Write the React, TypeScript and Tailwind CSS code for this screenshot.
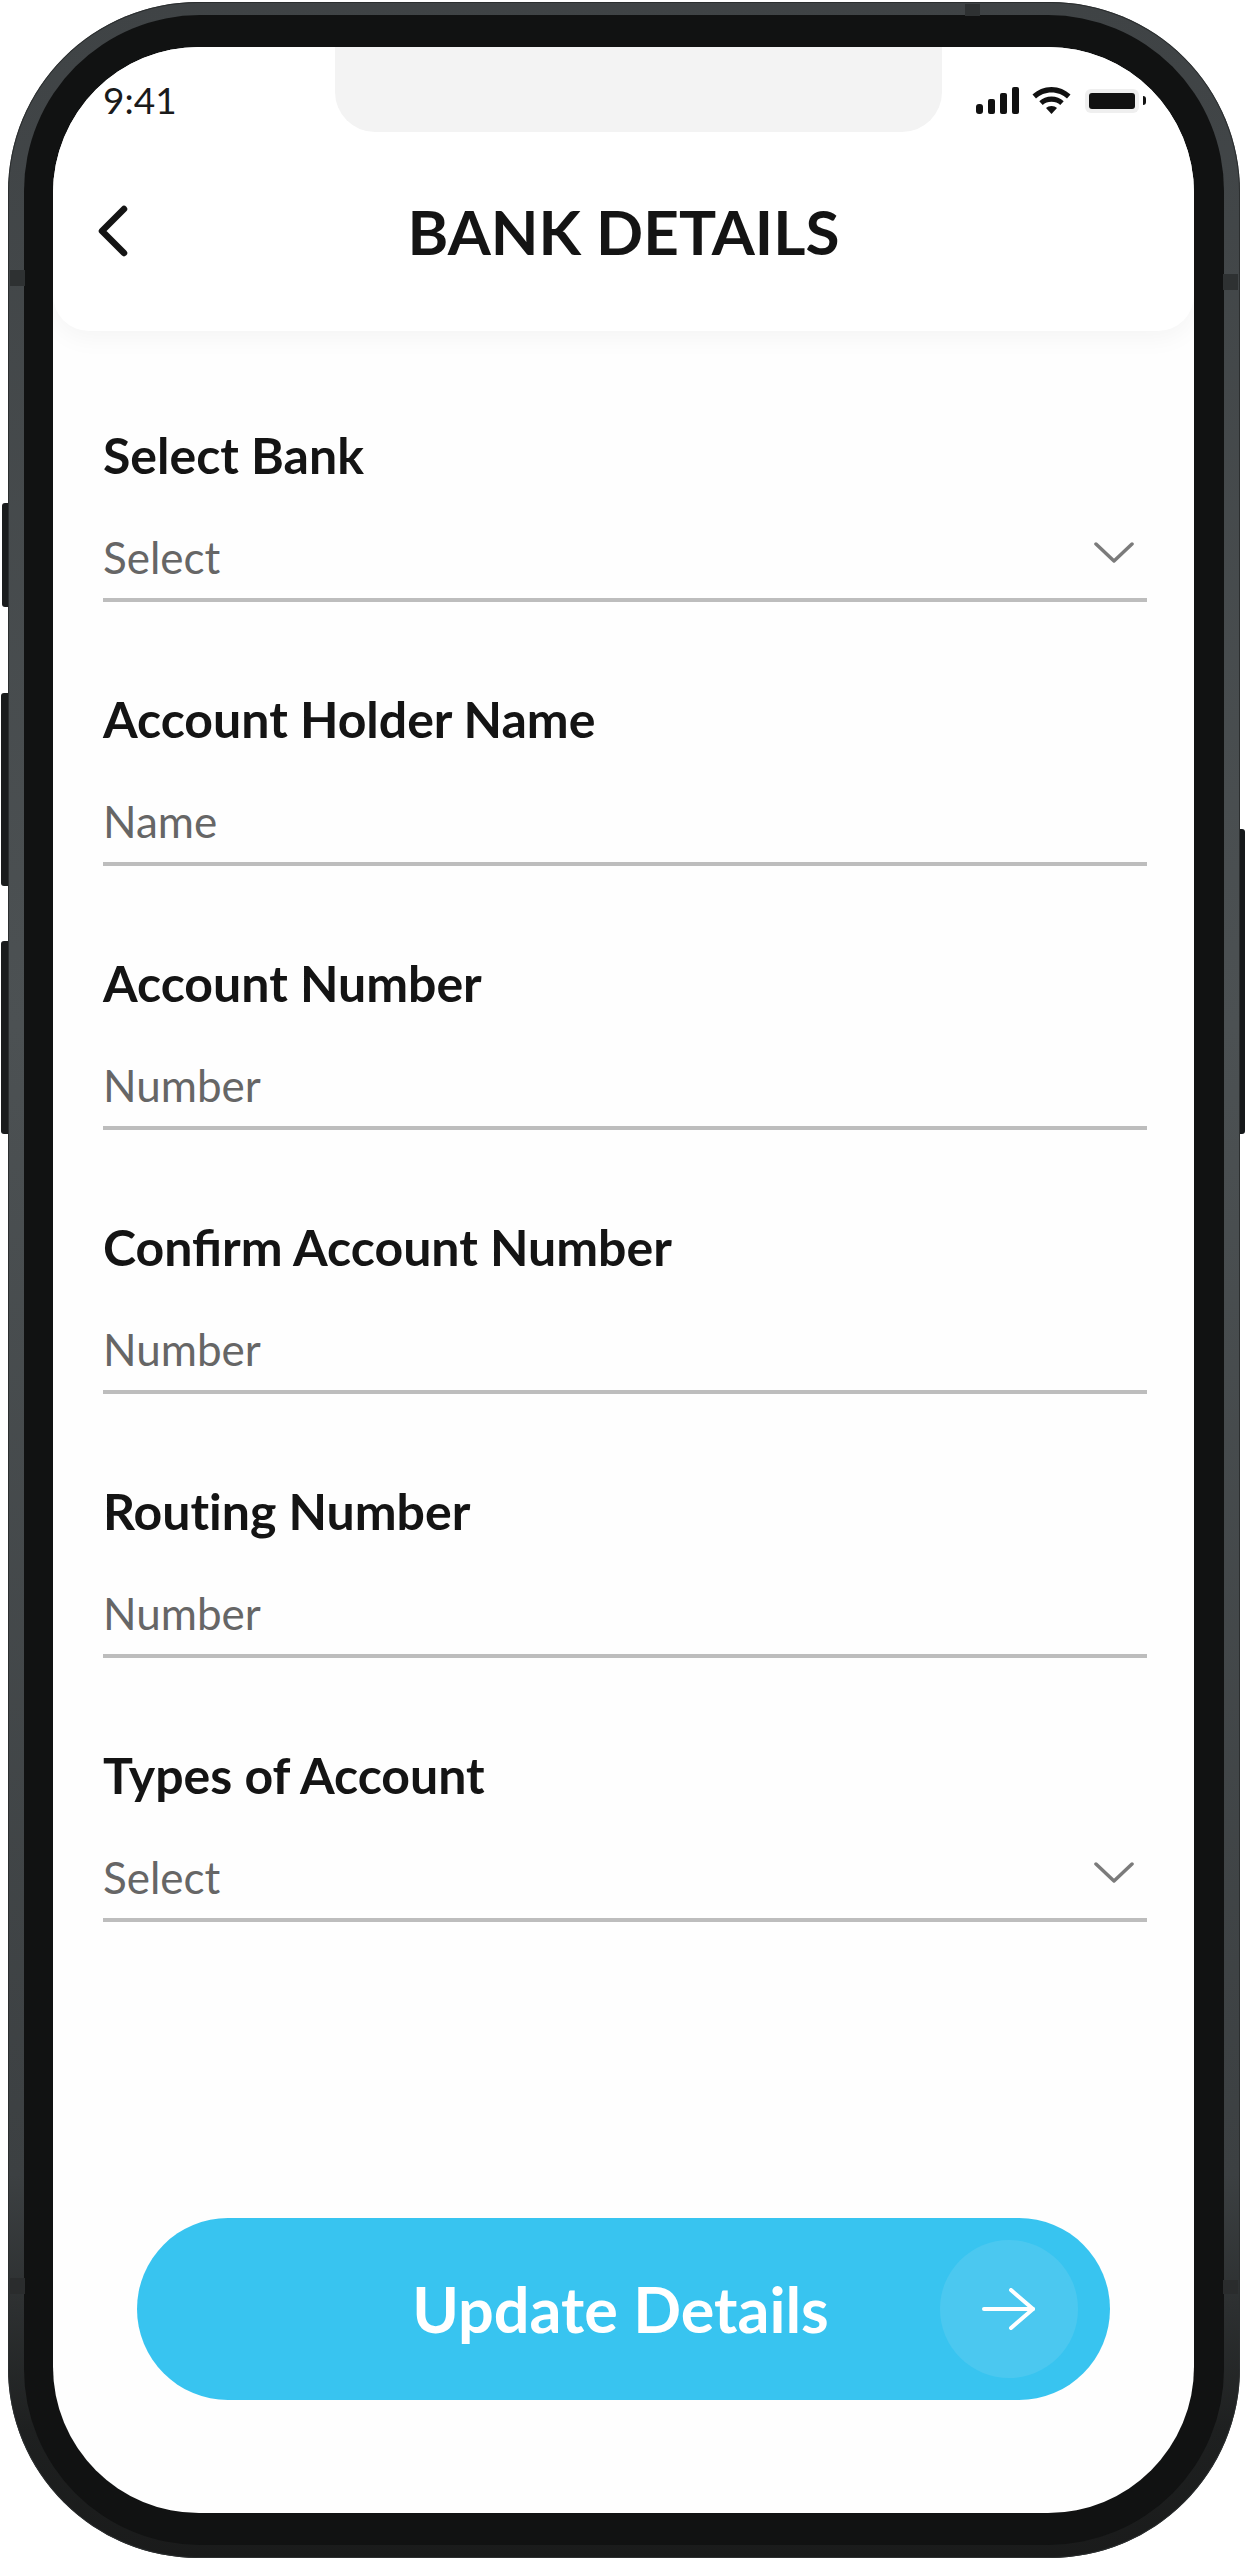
const fields = [
  { label: "Select Bank", placeholder: "Select", select: true },
  { label: "Account Holder Name", placeholder: "Name" },
  { label: "Account Number", placeholder: "Number" },
  { label: "Confirm Account Number", placeholder: "Number" },
  { label: "Routing Number", placeholder: "Number", noLigatures: true },
  { label: "Types of Account", placeholder: "Select", select: true },
];

function StatusIcons() {
  return (
    <div className="flex items-center">
      <svg width="44" height="27" viewBox="0 0 44 27" fill="#111">
        <rect x="0" y="17" width="7" height="10" rx="3" />
        <rect x="12" y="12" width="7" height="15" rx="2" />
        <rect x="24" y="6" width="7" height="21" rx="2" />
        <rect x="36" y="0" width="7" height="27" rx="2" />
      </svg>
      <svg className="ml-[12px]" width="39" height="27" viewBox="0 0 39 27" fill="#111">
        <path d="M19.5 0C12 0 5.5 3 0.5 7.5L4 11.5C8 7.8 13.5 5.5 19.5 5.5S31 7.8 35 11.5L38.5 7.5C33.5 3 27 0 19.5 0Z" />
        <path d="M19.5 9.5C14.8 9.5 10.5 11.3 7.3 14.3L10.7 18C13 16 16 14.8 19.5 14.8S26 16 28.3 18L31.7 14.3C28.5 11.3 24.2 9.5 19.5 9.5Z" />
        <path d="M19.5 19C17.3 19 15.4 19.8 14 21L19.5 27L25 21C23.6 19.8 21.7 19 19.5 19Z" />
      </svg>
      <div className="ml-[14px] h-[24px] w-[54px] rounded-[6px] bg-[#efefef] p-[4px]">
        <div className="h-full w-full rounded-[3px] bg-[#111]" />
      </div>
      <div className="ml-[4px] h-[9px] w-[3px] rounded-r-full bg-[#111]" />
    </div>
  );
}

function Field({ label, placeholder, select, noLigatures }: { label: string; placeholder: string; select?: boolean; noLigatures?: boolean }) {
  return (
    <div className="h-[264px]">
      <div className={noLigatures ? "h-[92px] text-[50px] leading-[60px] font-bold text-[#141414] [font-variant-ligatures:none]" : "h-[92px] text-[50px] leading-[60px] font-bold text-[#141414]"}>
        {label}
      </div>
      <div className="flex h-[85px] items-center justify-between border-b-[4px] border-[#bdbdbd]">
        <span className="pb-[2px] text-[44px] leading-[50px] text-[#666666]">{placeholder}</span>
        {select && (
          <svg className="mr-[13px] mb-[10px]" width="40" height="22" viewBox="0 0 40 22" fill="none" stroke="#7b7b7b" strokeWidth="3.5" strokeLinecap="round" strokeLinejoin="round">
            <path d="M2 2L20 19L38 2" />
          </svg>
        )}
      </div>
    </div>
  );
}

export default function App() {
  return (
    <div className="relative h-[2560px] w-[1245px] overflow-hidden bg-white pt-[2px] pr-[5px] pl-[8px] font-['Lato',sans-serif]">
      {/* side buttons */}
      <div className="absolute top-[503px] left-[2px] h-[104px] w-[8px] rounded-l-[3px] bg-[#1a1c1d]" />
      <div className="absolute top-[693px] left-[1px] h-[193px] w-[9px] rounded-l-[3px] bg-[#1a1c1d]" />
      <div className="absolute top-[941px] left-[1px] h-[193px] w-[9px] rounded-l-[3px] bg-[#1a1c1d]" />
      <div className="absolute top-[829px] right-0 h-[305px] w-[7px] rounded-r-[3px] bg-[#15181a]" />

      <div className="relative h-[2556px] w-[1232px] rounded-[190px] bg-[linear-gradient(180deg,#3f4345_0%,#4c5153_40%,#3c4042_85%,#1e2020_95%,#1a1b1b_100%)] pt-[13px] pr-[16px] pb-[13px] pl-[16px] shadow-[inset_0_0_0_1px_#2b2e2f]">
        {/* antenna bands */}
        <div className="absolute top-[268px] left-[2px] h-[16px] w-[15px] bg-[#2e3132]" />
        <div className="absolute top-[272px] right-[2px] h-[16px] w-[15px] bg-[#2e3132]" />
        <div className="absolute top-[2px] left-[957px] h-[12px] w-[15px] bg-[#2e3132]" />
        <div className="absolute top-[2276px] left-[2px] h-[16px] w-[15px] bg-[#2a2c2d]" />
        <div className="absolute top-[2278px] right-[2px] h-[14px] w-[15px] bg-[#2a2c2d]" />

        <div className="h-full w-full rounded-[176px] bg-[#111212] pt-[32px] pr-[30px] pb-[32px] pl-[29px]">
          <div className="flex h-full w-full flex-col overflow-hidden rounded-[146px] bg-[#fefefe]">
            <header className="h-[284px] shrink-0 rounded-b-[36px] bg-white shadow-[0_8px_24px_rgba(0,0,0,0.04)]">
              <div className="grid h-[85px] grid-cols-[282px_607px_1fr]">
                <span className="pt-[30px] pl-[50px] text-[37px] leading-[46px] text-[#1a1a1a]">9:41</span>
                {/* notch */}
                <div className="rounded-b-[40px] bg-[#f3f3f3]" />
                <div className="flex items-start justify-end pt-[40px] pr-[48px]">
                  <StatusIcons />
                </div>
              </div>
              <div className="mt-[59px] grid h-[80px] grid-cols-[1fr_auto_1fr] items-center">
                <svg className="ml-[44px]" width="32" height="52" viewBox="0 0 32 52" fill="none" stroke="#141414" strokeWidth="6.5" strokeLinecap="round" strokeLinejoin="round">
                  <path d="M27 4L5 26L27 48" />
                </svg>
                <h1 className="text-[62px] leading-[80px] font-bold text-[#141414]">BANK DETAILS</h1>
              </div>
            </header>

            <form className="flex flex-1 flex-col pt-[94px] pr-[47px] pl-[50px]">
              {fields.map((f) => (
                <Field key={f.label} label={f.label} placeholder={f.placeholder} select={f.select} noLigatures={f.noLigatures} />
              ))}
            </form>

            <div className="mx-[84px] mb-[113px] grid h-[182px] shrink-0 grid-cols-[138px_1fr_138px] items-center rounded-full bg-[#38c4f0] px-[32px]">
              <span />
              <span className="pr-[6px] text-center text-[63px] font-bold text-white">Update Details</span>
              <div className="flex h-[138px] w-[138px] items-center justify-center rounded-full bg-[#4bc8f0]">
                <svg width="54" height="42" viewBox="0 0 54 42" fill="none" stroke="#fff" strokeWidth="4" strokeLinecap="round" strokeLinejoin="round">
                  <path d="M2 21H51" />
                  <path d="M29 2L51 21L29 40" />
                </svg>
              </div>
            </div>
          </div>
        </div>
      </div>
    </div>
  );
}
